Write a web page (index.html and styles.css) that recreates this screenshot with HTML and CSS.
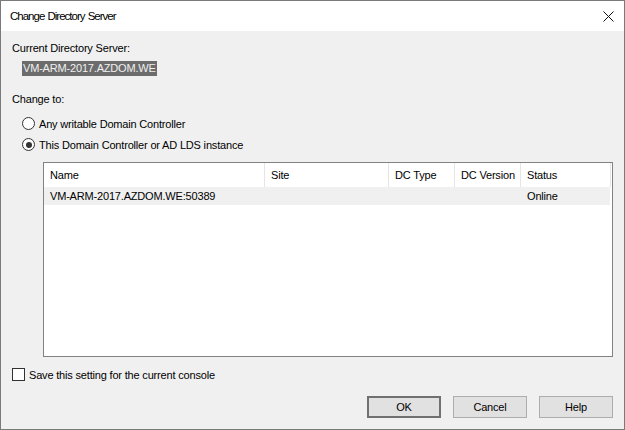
FILE: index.html
```html
<!DOCTYPE html>
<html>
<head>
<meta charset="utf-8">
<link rel="stylesheet" href="styles.css">
</head>
<body>
<div class="window">
  <div class="titlebar">
    <span class="title">Change Directory Server</span>
    <svg class="close" width="11" height="11" viewBox="0 0 11 11"><path d="M0.5 0.5 L10.5 10.5 M10.5 0.5 L0.5 10.5" stroke="#111" stroke-width="1" fill="none"/></svg>
  </div>
  <div class="content">
    <div class="label first">Current Directory Server:</div>
    <div class="server"><span class="hl">VM-ARM-2017.AZDOM.WE</span></div>
    <div class="label change">Change to:</div>
    <div class="radio-row r1"><span class="radio"></span><span>Any writable Domain Controller</span></div>
    <div class="radio-row r2"><span class="radio checked"></span><span>This Domain Controller or AD LDS instance</span></div>
    <div class="list">
      <div class="header">
        <div class="col c-name">Name</div>
        <div class="col c-site">Site</div>
        <div class="col c-type">DC Type</div>
        <div class="col c-ver">DC Version</div>
        <div class="col c-status">Status</div>
      </div>
      <div class="row">
        <div class="cell c-name">VM-ARM-2017.AZDOM.WE:50389</div>
        <div class="cell c-site"></div>
        <div class="cell c-type"></div>
        <div class="cell c-ver"></div>
        <div class="cell c-status">Online</div>
      </div>
    </div>
    <div class="check-row"><span class="checkbox"></span><span>Save this setting for the current console</span></div>
    <div class="buttons">
      <button class="btn default">OK</button>
      <button class="btn">Cancel</button>
      <button class="btn">Help</button>
    </div>
  </div>
</div>
</body>
</html>
```
FILE: styles.css
```css
html, body {
  margin: 0;
  padding: 0;
  background: #f0f0f0;
}
body {
  font-family: "Liberation Sans", Arial, sans-serif;
  font-size: 11px;
  letter-spacing: -0.18px;
  color: #000;
}
.window {
  width: 625px;
  height: 430px;
  box-sizing: border-box;
  border: 1px solid #7a7a7a;
  background: #f0f0f0;
  display: flex;
  flex-direction: column;
}
.titlebar {
  height: 30px;
  background: #fff;
  display: flex;
  align-items: center;
  justify-content: space-between;
  padding: 0 10px 0 9px;
  flex: none;
}
.title {
  font-size: 11.5px;
  letter-spacing: -1px;
  word-spacing: 1px;
  color: #000;
}
.close {
  display: block;
}
.content {
  flex: 1;
  padding: 0 11px;
  display: flex;
  flex-direction: column;
}
.label {
  line-height: 13px;
}
.first {
  margin-top: 11px;
}
.server {
  margin-top: 6px;
  padding-left: 10px;
  height: 15px;
}
.hl {
  display: inline-block;
  background: #6c6c6c;
  color: #f0f0f0;
  height: 15px;
  line-height: 15px;
  padding: 0 1px;
}
.change {
  margin-top: 17px;
}
.radio-row {
  display: flex;
  align-items: center;
  padding-left: 10px;
  height: 13px;
  gap: 4px;
}
.r1 { margin-top: 11px; }
.r2 { margin-top: 8px; }
.radio {
  width: 11px;
  height: 11px;
  border: 1px solid #333;
  border-radius: 50%;
  background: #fff;
  position: relative;
  flex: none;
}
.radio.checked::after {
  content: "";
  position: absolute;
  left: 2.5px;
  top: 2.5px;
  width: 6px;
  height: 6px;
  border-radius: 50%;
  background: #333;
}
.list {
  margin: 11px 0 0 31px;
  height: 195px;
  box-sizing: border-box;
  border: 1px solid #828282;
  background: #fff;
}
.header, .row {
  display: flex;
}
.header {
  height: 24px;
}
.col {
  box-sizing: border-box;
  border-right: 1px solid #e5e5e5;
  padding-left: 6px;
  line-height: 24px;
  flex: none;
}
.row {
  height: 18px;
  background: #f0f0f0;
  margin-right: 2px;
}
.cell {
  box-sizing: border-box;
  padding-left: 6px;
  line-height: 18px;
  flex: none;
}
.c-name { width: 221px; }
.c-site { width: 124px; }
.c-type { width: 66px; }
.c-ver { width: 66px; }
.c-status { width: 90px; }
.check-row {
  display: flex;
  align-items: center;
  margin-top: 11px;
  gap: 4px;
  height: 13px;
}
.checkbox {
  width: 11px;
  height: 11px;
  border: 1px solid #333;
  background: #fff;
  flex: none;
}
.buttons {
  display: flex;
  justify-content: flex-end;
  gap: 12px;
  margin-top: 15px;
}
.btn {
  width: 74px;
  height: 22px;
  box-sizing: border-box;
  border: 1px solid #adadad;
  background: #e1e1e1;
  font-family: "Liberation Sans", Arial, sans-serif;
  font-size: 11px;
  letter-spacing: -0.18px;
  color: #000;
  padding: 0;
}
.btn.default {
  border: 2px solid #707070;
}
```
